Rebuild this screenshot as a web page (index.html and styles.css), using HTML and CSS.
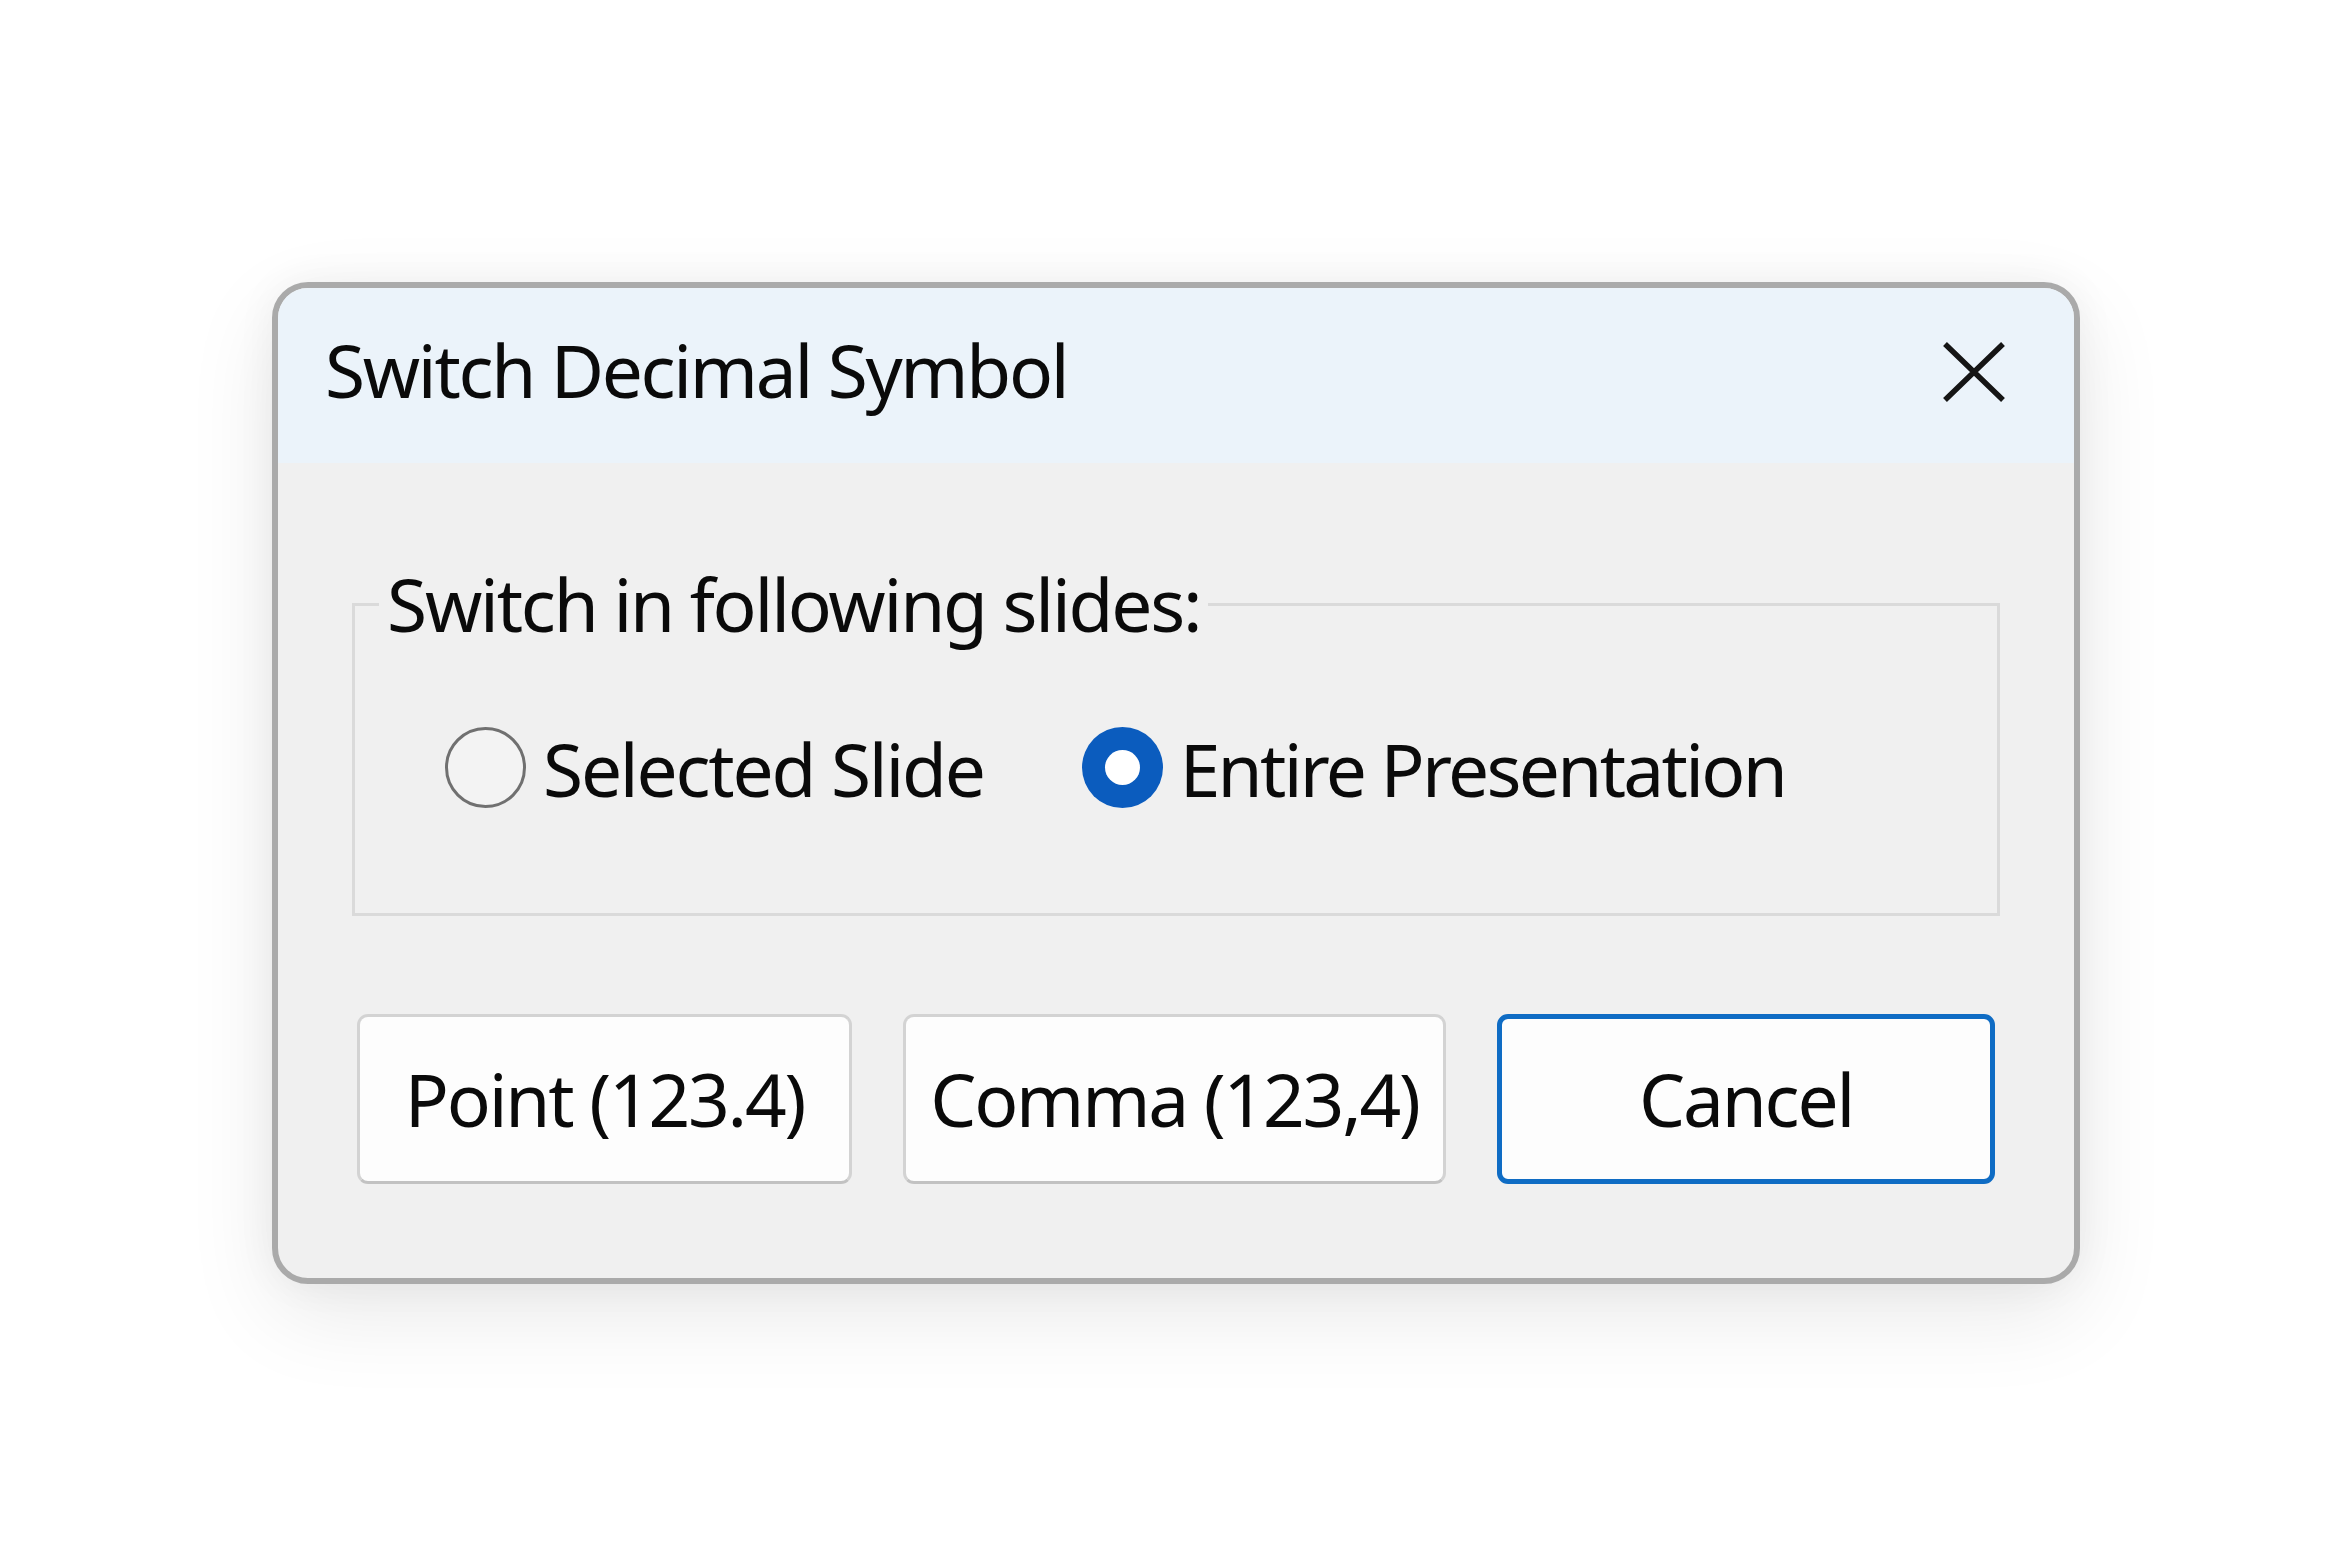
FILE: index.html
```html
<!DOCTYPE html>
<html lang="en">
<head>
<meta charset="utf-8">
<title>Switch Decimal Symbol</title>
<link rel="stylesheet" href="styles.css">
</head>
<body>
<div class="stage">
  <div class="dialog">
    <div class="titlebar">
      <div class="title">Switch Decimal Symbol</div>
      <button class="close" aria-label="Close">
        <svg viewBox="0 0 62 60" width="62" height="60"><path d="M2 2 L60 58 M60 2 L2 58" stroke="#151515" stroke-width="5.5" fill="none"/></svg>
      </button>
    </div>
    <div class="content">
      <fieldset class="group">
        <legend class="group-label">Switch in following slides:</legend>
        <div class="options">
          <label class="option">
            <span class="radio"></span>
            <span class="option-text">Selected Slide</span>
          </label>
          <label class="option option-second">
            <span class="radio radio-checked"><span class="radio-dot"></span></span>
            <span class="option-text option-text-tight">Entire Presentation</span>
          </label>
        </div>
      </fieldset>
      <div class="buttons">
        <button class="btn btn-point">Point (123.4)</button>
        <button class="btn btn-comma">Comma (123,4)</button>
        <button class="btn btn-cancel">Cancel</button>
      </div>
    </div>
  </div>
</div>
</body>
</html>
```
FILE: styles.css
```css
html, body {
  margin: 0;
  padding: 0;
  background: #ffffff;
}
body {
  font-family: "Noto Sans", "Open Sans", sans-serif;
  color: #0a0a0a;
}
.stage {
  box-sizing: border-box;
  height: 1567px;
  padding: 282px 0 0 272px;
}
.dialog {
  box-sizing: border-box;
  width: 1808px;
  height: 1002px;
  border: 6px solid #aaaaaa;
  border-radius: 36px;
  background: #f0f0f0;
  overflow: hidden;
  box-shadow: 0 30px 90px rgba(0, 0, 0, 0.09), 0 0 40px rgba(0, 0, 0, 0.05);
  display: flex;
  flex-direction: column;
}
.titlebar {
  box-sizing: border-box;
  height: 175px;
  background: #ebf3fa;
  padding: 32px 69px 0 47px;
  display: flex;
  justify-content: space-between;
  align-items: flex-start;
}
.title {
  font-size: 73px;
  line-height: 100px;
  letter-spacing: -2.3px;
}
.close {
  margin: 22px 0 0 0;
  padding: 0;
  border: 0;
  background: transparent;
  width: 62px;
  height: 60px;
  display: block;
}
.close svg {
  display: block;
}
.content {
  padding: 91px 74px 0 74px;
  display: flex;
  flex-direction: column;
}
.group {
  margin: 0;
  border: 3px solid #dadada;
  padding: 0 24px 94px 24px;
  min-width: 0;
}
.group-label {
  padding: 0 8px;
  font-size: 73px;
  line-height: 100px;
  letter-spacing: -2.2px;
}
.options {
  margin: 65px 0 0 66px;
  display: flex;
  align-items: center;
  height: 100px;
}
.option {
  display: flex;
  align-items: center;
}
.option-second {
  margin-left: 98px;
}
.radio {
  box-sizing: border-box;
  width: 81px;
  height: 81px;
  border-radius: 50%;
  border: 3.5px solid #707070;
  background: #f3f3f3;
  margin-top: -4px;
  display: flex;
  align-items: center;
  justify-content: center;
}
.radio-checked {
  border: 0;
  background: #0b5cbe;
}
.radio-dot {
  width: 35px;
  height: 35px;
  border-radius: 50%;
  background: #ffffff;
}
.option-text {
  font-size: 73px;
  line-height: 100px;
  letter-spacing: -2.2px;
  margin-left: 17px;
}
.option-text-tight {
  letter-spacing: -2.7px;
}
.buttons {
  margin: 98px 5px 0 5px;
  display: flex;
  gap: 51px;
}
.btn {
  box-sizing: border-box;
  height: 170px;
  font-family: "Noto Sans", "Open Sans", sans-serif;
  font-size: 73px;
  line-height: 100px;
  letter-spacing: -2.2px;
  color: #0a0a0a;
  background: #fdfdfd;
  border: 3px solid #d3d3d3;
  border-bottom-color: #c2c2c2;
  border-radius: 11px;
  padding: 0;
  display: flex;
  align-items: center;
  justify-content: center;
}
.btn-point {
  width: 495px;
}
.btn-comma {
  width: 543px;
}
.btn-cancel {
  width: 498px;
  border: 5px solid #0f6cc4;
}
```
